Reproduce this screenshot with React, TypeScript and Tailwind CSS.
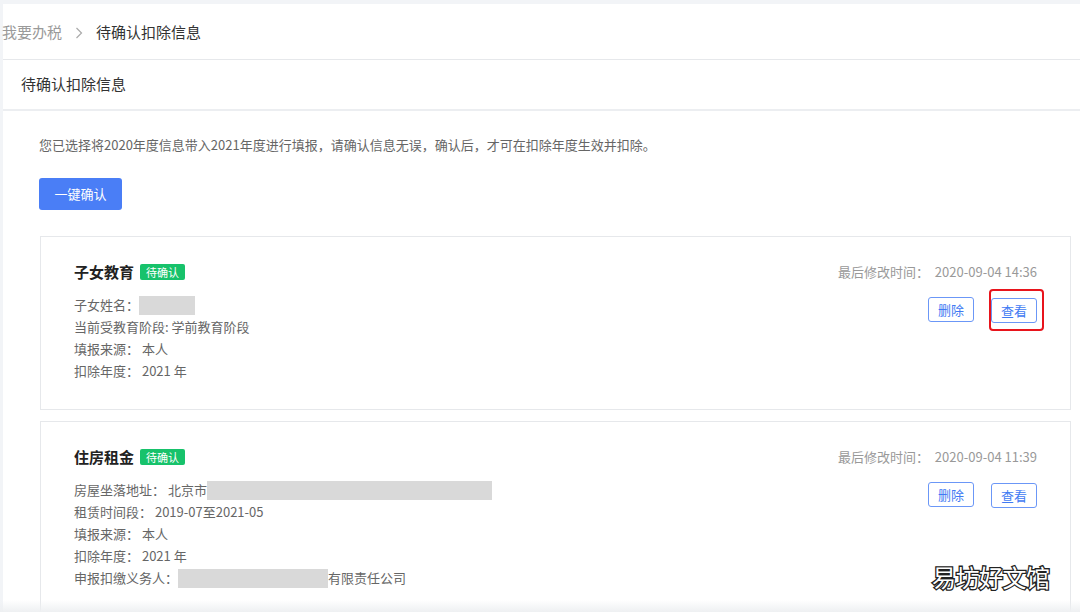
import React from "react"

const font = "font-['Noto_Sans_CJK_SC','Noto_Sans',sans-serif]"

function Redacted({ w }: { w: number }) {
  return <span className="inline-block h-[19px] bg-[#d9d9d9] align-middle" style={{ width: w }} />
}

function Badge() {
  return (
    <span className="ml-[6px] inline-flex h-[16px] items-center rounded-[2px] bg-[#17c26b] px-[6px] text-[11px] leading-none text-white">
      待确认
    </span>
  )
}

function OutlineButton({ label }: { label: string }) {
  return (
    <button className="h-[25px] w-[46px] rounded-[3px] border border-[#6b97f7] bg-white text-[13px] leading-none text-[#3f7af3]">
      {label}
    </button>
  )
}

type CardProps = {
  title: string
  time: string
  rows: React.ReactNode[]
  highlight?: boolean
}

function DeductionCard({ title, time, rows, highlight }: CardProps) {
  return (
    <div className="flex justify-between border border-[#e6e8eb] bg-white pl-[33px] pr-[33px] pt-[24px] pb-[27px]">
      <div>
        <div className="flex h-[22px] items-center">
          <span className="text-[15px] font-bold text-[#222]">{title}</span>
          <Badge />
        </div>
        <div className="mt-[11px] text-[13px] leading-[22px] text-[#666]">
          {rows.map((row, i) => (
            <div key={i} className="flex h-[22px] items-center">
              {row}
            </div>
          ))}
        </div>
      </div>
      <div className="flex flex-col items-end">
        <div className="h-[22px] text-[13px] leading-[22px] text-[#999]">
          最后修改时间：&nbsp; {time}
        </div>
        <div className="mt-[14px] flex gap-[17px]">
          <OutlineButton label="删除" />
          <span className="relative">
            <OutlineButton label="查看" />
            {highlight && (
              <span className="pointer-events-none absolute -left-[2px] -right-[7px] -top-[8px] -bottom-[8px] rounded-[4px] border-2 border-[#e8141c]" />
            )}
          </span>
        </div>
      </div>
    </div>
  )
}

export default function App() {
  return (
    <div className={`relative h-[612px] w-[1080px] overflow-hidden bg-[#f2f4f7] pl-[3px] pt-[4px] ${font}`}>
      <div className="h-full bg-white">
        {/* Breadcrumb */}
        <div className="flex h-[56px] items-center border-b border-[#e6e8eb] pt-[2px] text-[15px]">
          <span className="-ml-[1px] text-[#9a9a9a]">我要办税</span>
          <svg className="ml-[13px] mr-[13px]" width="8" height="12" viewBox="0 0 8 12">
            <polyline points="1.5,1 6.5,6 1.5,11" fill="none" stroke="#aaa" strokeWidth="1.2" />
          </svg>
          <span className="text-[#333]">待确认扣除信息</span>
        </div>

        {/* Title */}
        <div className="flex h-[51px] items-center border-b-2 border-[#eceef1] pl-[18px] text-[15px] text-[#333]">
          待确认扣除信息
        </div>

        {/* Content */}
        <div className="pl-[36px] pr-[9px] pt-[24px]">
          <p className="text-[13px] leading-[20px] text-[#666]">
            您已选择将2020年度信息带入2021年度进行填报，请确认信息无误，确认后，才可在扣除年度生效并扣除。
          </p>
          <button className="mt-[23px] h-[32px] w-[83px] rounded-[3px] bg-[#4a7ef6] text-[13px] text-white">
            一键确认
          </button>

          <div className="ml-px mt-[26px] flex flex-col gap-[11px]">
            <DeductionCard
              title="子女教育"
              time="2020-09-04 14:36"
              highlight
              rows={[
                <>
                  子女姓名：<Redacted w={56} />
                </>,
                <>当前受教育阶段: 学前教育阶段</>,
                <>填报来源：&nbsp;本人</>,
                <>扣除年度：&nbsp;2021 年</>,
              ]}
            />
            <DeductionCard
              title="住房租金"
              time="2020-09-04 11:39"
              rows={[
                <>
                  房屋坐落地址：&nbsp;北京市<Redacted w={285} />
                </>,
                <>租赁时间段：&nbsp;2019-07至2021-05</>,
                <>填报来源：&nbsp;本人</>,
                <>扣除年度：&nbsp;2021 年</>,
                <>
                  申报扣缴义务人：<Redacted w={150} />有限责任公司
                </>,
              ]}
            />
          </div>
        </div>
      </div>

      {/* bottom shade */}
      <div className="pointer-events-none absolute bottom-0 left-0 right-0 h-[12px] bg-gradient-to-b from-transparent to-[#eef0f2]" />

      {/* Watermark */}
      <div className="pointer-events-none absolute left-[932px] top-[561px] text-[24px] leading-[32px] tracking-[-0.5px] text-white [-webkit-text-stroke:2.6px_#222] [paint-order:stroke_fill]">
        易坊好文馆
      </div>
    </div>
  )
}
